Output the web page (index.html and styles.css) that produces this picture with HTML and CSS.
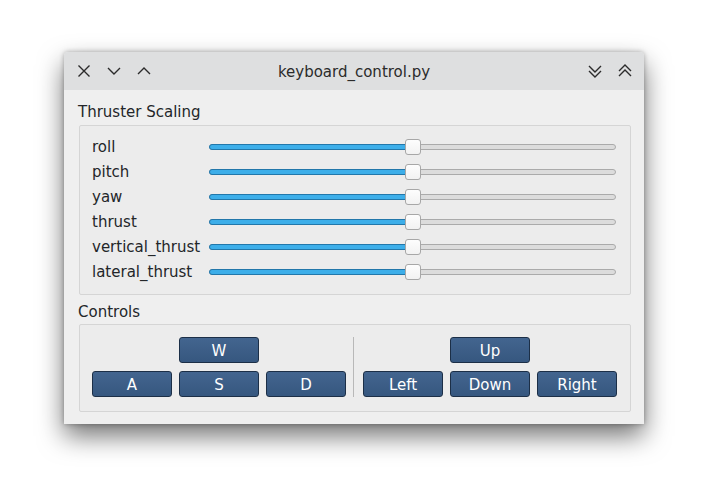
FILE: index.html
```html
<!DOCTYPE html>
<html>
<head>
<meta charset="utf-8">
<link rel="stylesheet" href="styles.css">
</head>
<body>
<div class="window">
  <div class="titlebar">
    <div class="tb-left">
      <svg class="tb-icon" viewBox="0 0 16 16" width="16" height="16"><path d="M2.5 2.5 L13.5 13.5 M13.5 2.5 L2.5 13.5" stroke="#2b2b2b" stroke-width="1.4" fill="none"/></svg>
      <svg class="tb-icon" viewBox="0 0 16 16" width="16" height="16"><path d="M2 5 L8 11 L14 5" stroke="#2b2b2b" stroke-width="1.4" fill="none"/></svg>
      <svg class="tb-icon" viewBox="0 0 16 16" width="16" height="16"><path d="M2 11 L8 5 L14 11" stroke="#2b2b2b" stroke-width="1.4" fill="none"/></svg>
    </div>
    <div class="tb-title">keyboard_control.py</div>
    <div class="tb-right">
      <svg class="tb-icon" viewBox="0 0 16 16" width="16" height="16"><path d="M2 3 L8 9 L14 3 M2 8 L8 14 L14 8" stroke="#2b2b2b" stroke-width="1.4" fill="none"/></svg>
      <svg class="tb-icon" viewBox="0 0 16 16" width="16" height="16"><path d="M2 8 L8 2 L14 8 M2 13 L8 7 L14 13" stroke="#2b2b2b" stroke-width="1.4" fill="none"/></svg>
    </div>
  </div>
  <div class="content">
    <div class="group-title">Thruster Scaling</div>
    <div class="frame sliders">
      <div class="row"><span class="lbl">roll</span><div class="slider"><div class="fill" style="width:50%"></div><div class="handle" style="left:50%"></div></div></div>
      <div class="row"><span class="lbl">pitch</span><div class="slider"><div class="fill" style="width:50%"></div><div class="handle" style="left:50%"></div></div></div>
      <div class="row"><span class="lbl">yaw</span><div class="slider"><div class="fill" style="width:50%"></div><div class="handle" style="left:50%"></div></div></div>
      <div class="row"><span class="lbl">thrust</span><div class="slider"><div class="fill" style="width:50%"></div><div class="handle" style="left:50%"></div></div></div>
      <div class="row"><span class="lbl">vertical_thrust</span><div class="slider"><div class="fill" style="width:50%"></div><div class="handle" style="left:50%"></div></div></div>
      <div class="row"><span class="lbl">lateral_thrust</span><div class="slider"><div class="fill" style="width:50%"></div><div class="handle" style="left:50%"></div></div></div>
    </div>
    <div class="group-title second">Controls</div>
    <div class="frame controls">
      <div class="keys">
        <div class="btn k-top">W</div>
        <div class="btn k-bot">A</div>
        <div class="btn k-bot">S</div>
        <div class="btn k-bot">D</div>
      </div>
      <div class="sep"></div>
      <div class="keys">
        <div class="btn k-top">Up</div>
        <div class="btn k-bot">Left</div>
        <div class="btn k-bot">Down</div>
        <div class="btn k-bot">Right</div>
      </div>
    </div>
  </div>
</div>
</body>
</html>
```

FILE: styles.css
```css
* { box-sizing: border-box; }
html, body { margin: 0; background: #ffffff; }
body {
  min-height: 502px;
  padding: 52px 0 0 64px;
  font-family: "DejaVu Sans", sans-serif;
  color: #232629;
}
.window {
  width: 580px;
  height: 372px;
  background: #efefef;
  border-radius: 4px 4px 0 0;
  box-shadow: 0 12px 26px rgba(0,0,0,0.55), 0 0 5px rgba(0,0,0,0.3);
  overflow: hidden;
}
.titlebar {
  height: 38px;
  background: #dedfe0;
  display: flex;
  align-items: center;
  position: relative;
  padding: 0 11px;
}
.tb-left, .tb-right { display: flex; gap: 14px; align-items: center; }
.tb-left { padding-left: 1px; }
.tb-right { margin-left: auto; padding-right: 0; }
.tb-icon { display: block; }
.tb-title {
  position: absolute;
  left: 0; right: 0;
  text-align: center;
  font-size: 15px;
  color: #2b2b2b;
  pointer-events: none;
  top: 11px;
}
.content { padding: 12px 13px 0 15px; }
.group-title {
  font-size: 15px;
  margin-left: -1px;
  height: 23px;
  line-height: 20px;
}
.group-title.second { margin-top: 7px; height: 22px; }
.frame {
  border: 1px solid #d5d5d5;
  border-radius: 2px;
  background: #ececec;
}
.sliders { padding: 8px 14px 10px 12px; height: 170px; }
.row { display: flex; align-items: center; height: 25px; }
.lbl { width: 117px; font-size: 15px; line-height: 25px; white-space: nowrap; padding-top: 1px; }
.slider {
  flex: 1;
  height: 6px;
  position: relative;
  background: #dcdcdc;
  border: 1px solid #aaaaaa;
  border-radius: 3px;
}
.fill {
  position: absolute;
  left: -1px; top: -1px; bottom: -1px;
  background: #3daee9;
  border: 1px solid #2277aa;
  border-radius: 3px 0 0 3px;
}
.handle {
  position: absolute;
  top: -6px;
  width: 16px;
  height: 16px;
  margin-left: -8px;
  background: linear-gradient(#fdfdfd, #f2f2f2);
  border: 1px solid #a7a7a7;
  border-radius: 3px;
}
.controls {
  height: 88px;
  padding: 12px 12px 0 12px;
  display: flex;
  align-items: flex-start;
}
.keys {
  display: grid;
  grid-template-columns: repeat(3, 80px);
  grid-template-rows: 26px 26px;
  column-gap: 7px;
  row-gap: 8px;
}
.k-top { grid-column: 2; grid-row: 1; }
.k-bot { grid-row: 2; }
.btn {
  height: 26px;
  background: linear-gradient(#43658f, #36577f);
  border: 1px solid #1c2f47;
  border-radius: 3px;
  color: #ffffff;
  font-size: 15px;
  display: flex;
  align-items: center;
  justify-content: center;
  padding-top: 1px;
}
.sep {
  width: 1px;
  height: 60px;
  background: #b8b8b8;
  margin: 0 9px 0 7px;
}
```
